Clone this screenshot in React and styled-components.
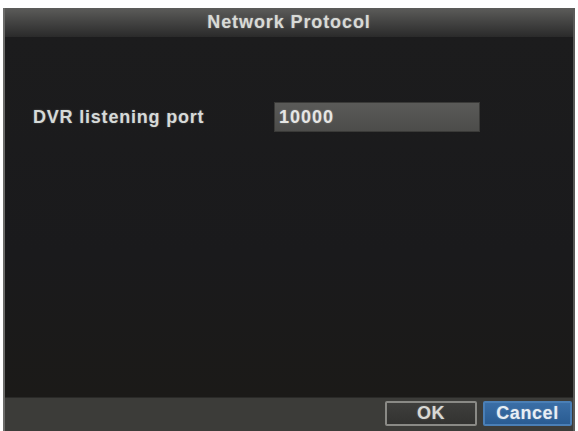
import React from "react";
import styled, { createGlobalStyle } from "styled-components";

const GlobalStyle = createGlobalStyle`
  html, body {
    margin: 0;
    background: #ffffff;
  }
  body {
    font-family: "Liberation Sans", Arial, sans-serif;
  }
`;

const Screen = styled.div`
  width: 578px;
  height: 431px;
  padding: 8px 3px 0 3px;
  box-sizing: border-box;
`;

const Dialog = styled.div`
  height: 100%;
  display: flex;
  flex-direction: column;
  background: #1b1b1c;
  border-left: 2px solid #6c6c6a;
  border-right: 2px solid #5a5a58;
  box-sizing: border-box;
`;

const TitleBar = styled.div`
  height: 29px;
  display: flex;
  align-items: center;
  justify-content: center;
  background: linear-gradient(#5c5c5a 0%, #454544 45%, #2a2a2a 100%);
  color: #d8dad6;
  font-size: 18px;
  font-weight: bold;
  letter-spacing: 0.9px;
  text-shadow: 0 0 2px rgba(255, 255, 255, 0.35);
`;

const Body = styled.div`
  flex: 1;
  padding: 65px 0 0 28px;
  background: linear-gradient(#1c1c1d, #1a1a1c 60%, #1b1a18);
`;

const FieldRow = styled.div`
  display: flex;
  align-items: center;
  height: 30px;
`;

const Label = styled.div`
  width: 241px;
  color: #d6dad8;
  font-size: 18px;
  font-weight: bold;
  letter-spacing: 0.8px;
  text-shadow: 0 0 2px rgba(255, 255, 255, 0.3);
`;

const Input = styled.div`
  width: 206px;
  height: 30px;
  box-sizing: border-box;
  padding-left: 4px;
  display: flex;
  align-items: center;
  background: linear-gradient(#5a5a58, #4c4c4a);
  border: 1px solid #3a3a38;
  color: #e6e6e4;
  font-size: 18px;
  font-weight: bold;
  letter-spacing: 1px;
  text-shadow: 0 0 2px rgba(255, 255, 255, 0.3);
`;

const Footer = styled.div`
  height: 34px;
  display: flex;
  align-items: center;
  justify-content: flex-end;
  gap: 6px;
  padding: 0 1px 3px 0;
  box-sizing: border-box;
  background: #3c3c39;
  border-top: 1px solid #2a2a28;
`;

const Button = styled.div`
  width: ${(p) => p.$w}px;
  height: 25px;
  box-sizing: border-box;
  display: flex;
  align-items: center;
  justify-content: center;
  font-size: 18px;
  font-weight: bold;
  letter-spacing: 0.6px;
  color: ${(p) => (p.$primary ? "#e8eef4" : "#d8d8d4")};
  background: ${(p) =>
    p.$primary
      ? "linear-gradient(#3a6ea6, #2a5c92)"
      : "linear-gradient(#3e3e3c, #333331)"};
  border: 2px solid ${(p) => (p.$primary ? "#4a7fb6" : "#8a8a86")};
  border-radius: 2px;
  text-shadow: 0 0 2px rgba(255, 255, 255, 0.3);
`;

export default function App() {
  return (
    <>
      <GlobalStyle />
      <Screen>
        <Dialog>
          <TitleBar>Network Protocol</TitleBar>
          <Body>
            <FieldRow>
              <Label>DVR listening port</Label>
              <Input>10000</Input>
            </FieldRow>
          </Body>
          <Footer>
            <Button $w={92}>OK</Button>
            <Button $w={89} $primary>
              Cancel
            </Button>
          </Footer>
        </Dialog>
      </Screen>
    </>
  );
}
